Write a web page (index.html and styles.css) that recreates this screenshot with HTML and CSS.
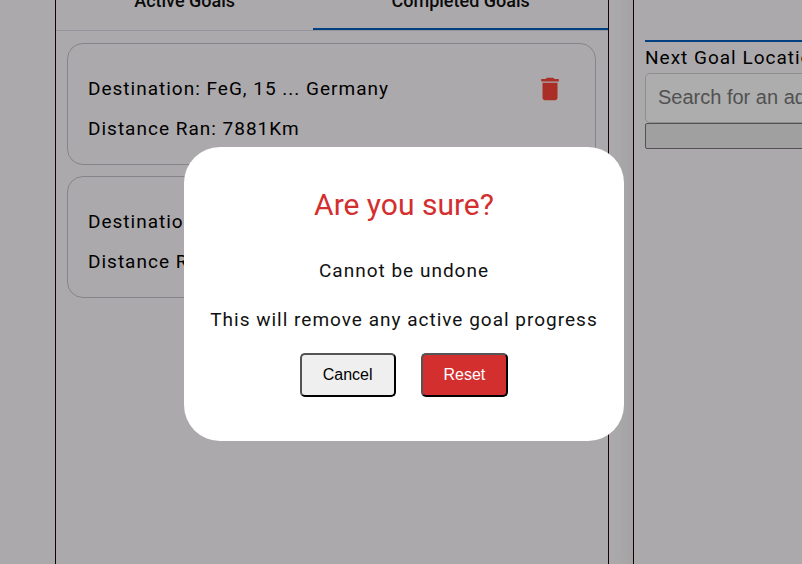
FILE: index.html
```html
<!DOCTYPE html>
<html lang="en">
<head>
<meta charset="utf-8">
<title>Goals</title>
<link rel="stylesheet" href="styles.css">
</head>
<body>
<main class="page">
  <section class="panel">
    <div class="tabs" role="tablist">
      <button class="tab" role="tab" type="button">Active Goals</button>
      <button class="tab tab-selected" role="tab" type="button" aria-selected="true">Completed Goals</button>
    </div>
    <div class="goals">
      <article class="goal">
        <div>
          <p>Destination: FeG, 15 ... Germany</p>
          <p>Distance Ran: 7881Km</p>
        </div>
        <button class="delete" type="button" aria-label="Delete goal">
          <svg viewBox="0 0 24 24" width="30" height="30"><path fill="currentColor" d="M6 19c0 1.100.9 2 2 2h8c1.100 0 2-.9 2-2V7H6v12zM19 4h-3.500l-1-1h-5l-1 1H5v2h14V4z"/></svg>
        </button>
      </article>
      <article class="goal">
        <div>
          <p>Destination:</p>
          <p>Distance Ran:</p>
        </div>
      </article>
    </div>
  </section>
  <section class="panel search-panel">
    <div class="rule"></div>
    <label class="search-label" for="search">Next Goal Location</label>
    <input class="search" id="search" type="text" placeholder="Search for an address">
    <button class="submit" type="button" aria-label="Set goal"></button>
  </section>
</main>
<div class="overlay">
  <div class="dialog" role="dialog" aria-modal="true" aria-labelledby="dialog-title">
    <h2 class="dialog-title" id="dialog-title">Are you sure?</h2>
    <p class="dialog-text">Cannot be undone</p>
    <p class="dialog-text">This will remove any active goal progress</p>
    <div class="actions">
      <button class="action" type="button">Cancel</button>
      <button class="action action-danger" type="button">Reset</button>
    </div>
  </div>
</div>
</body>
</html>
```
FILE: styles.css
```css
* {
  box-sizing: border-box;
}

body {
  margin: 0;
  overflow: hidden;
  background: #f6f3f6;
  color: #000;
  font: 19px/20px Roboto, sans-serif;
  letter-spacing: 1px;
}

p,
h2 {
  margin: 0;
}

.page {
  display: grid;
  grid-template-columns: calc(100vw - 248px) calc(100vw - 248px);
  gap: 24px;
  min-height: calc(100vh + 40px);
  margin-top: -28px;
  padding-left: 55px;
}

.panel {
  border: 1px solid #200;
}

.tabs {
  display: flex;
  border-bottom: 1px solid #d5d6e0;
}

.tab {
  flex: 1 1 auto;
  height: 57px;
  padding: 0 16px;
  border: 0;
  border-bottom: 2px solid transparent;
  background: none;
  color: #111;
  font: 500 18px/20px Roboto, sans-serif;
}

.tab-selected {
  border-bottom-color: #005bb8;
}

.goals {
  display: grid;
  gap: 11px;
  padding: 12px 12px 12px 11px;
}

.goal {
  display: flex;
  justify-content: space-between;
  align-items: flex-start;
  padding: 25px 30px 15px 20px;
  border: 1px solid #bdbec4;
  border-radius: 16px;
  line-height: 40px;
}

.delete {
  display: flex;
  padding: 5px 0;
  border: 0;
  background: none;
  color: #f44336;
}

.search-panel {
  padding: 67px 11px;
  box-shadow: 0 0 24px #ddd;
}

.rule {
  height: 2px;
  background: #005bb8;
}

.search-label {
  display: block;
  padding: 6px 0 5px;
}

.search {
  display: block;
  width: 100%;
  height: 50px;
  padding: 0 12px 2px;
  border: 1px solid #ccc;
  border-radius: 5px;
  background: #f8f8f8;
  font: 20px "Liberation Sans", sans-serif;
}

.search::placeholder {
  color: #757575;
}

.submit {
  display: block;
  width: 100%;
  height: 26px;
  border: 1px solid #767676;
  border-radius: 2px;
  background: #e6e6e6;
}

.overlay {
  position: fixed;
  inset: 0;
  display: flex;
  align-items: center;
  justify-content: center;
  padding: 24px 0 0 6px;
  background: rgba(0, 0, 0, 0.3);
}

.dialog {
  padding: 40px 26px 44px;
  border-radius: 36px;
  background: #fff;
  color: #111;
  text-align: center;
}

.dialog-title {
  margin-bottom: 35px;
  color: #d32f2f;
  font-size: 30px;
  font-weight: 400;
  line-height: 36px;
  letter-spacing: 0;
}

.dialog-text {
  margin-bottom: 24px;
  line-height: 25px;
}

.actions {
  display: flex;
  justify-content: center;
  gap: 25px;
  margin-top: -3px;
}

.action {
  height: 44px;
  padding: 0 21px;
  border: 2px outset #000;
  border-radius: 5px;
  background: #efefef;
  color: #000;
  font: 16px "Liberation Sans", sans-serif;
}

.action-danger {
  background: #d32f2f;
  color: #fff;
}
```
